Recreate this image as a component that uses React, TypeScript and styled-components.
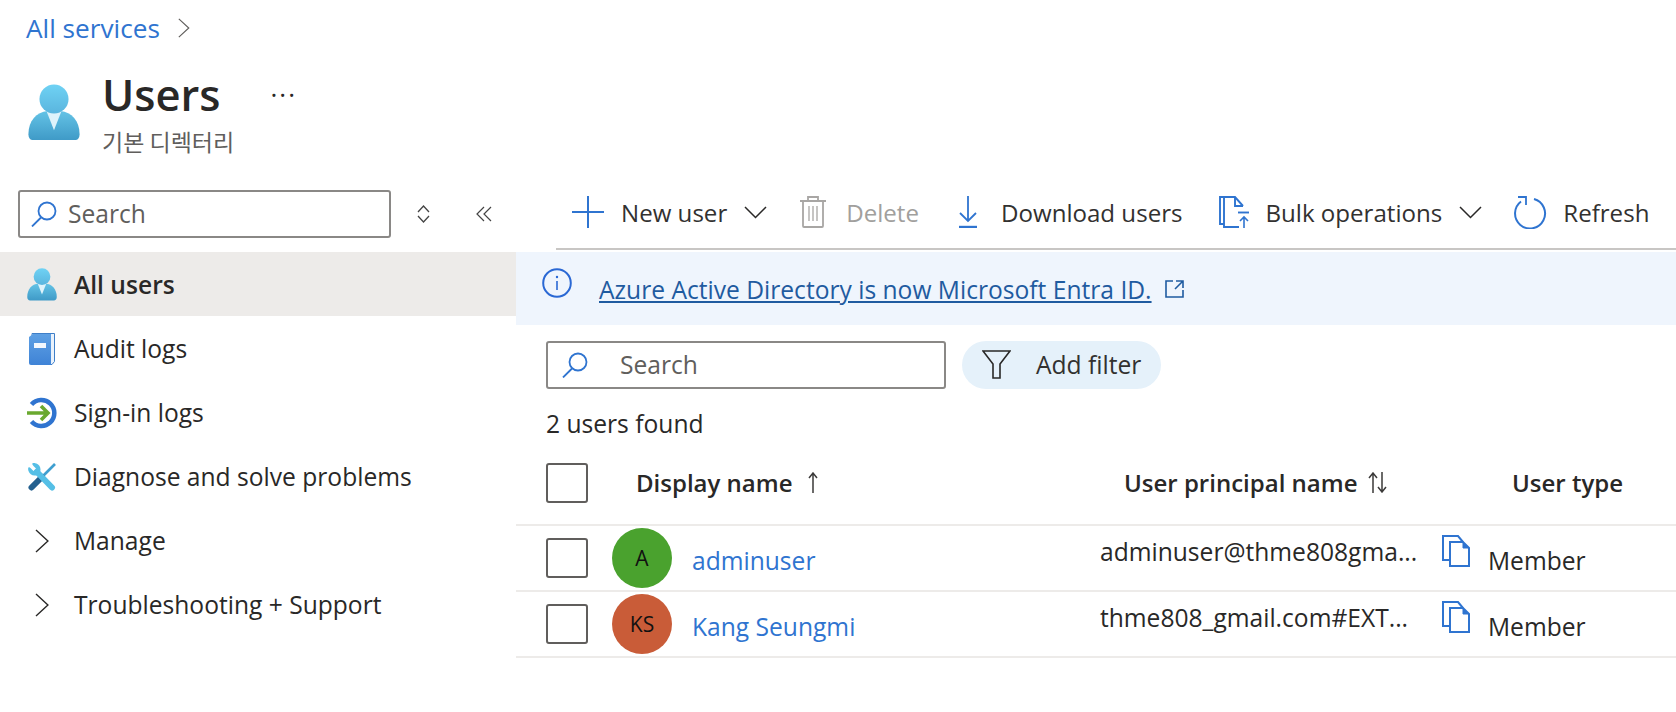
import React, { useId } from "react";
import styled, { createGlobalStyle } from "styled-components";

const blue = "#2f74d0";

const GlobalStyle = createGlobalStyle`
  html, body {
    margin: 0;
    padding: 0;
    background: #fff;
  }
  body {
    font-family: "Open Sans", "Noto Sans", "Noto Sans CJK KR", sans-serif;
    color: #292827;
    overflow: hidden;
  }
`;

type IconProps = { size?: number };

const PersonIcon: React.FC<IconProps> = ({ size = 32 }) => {
  const id = useId();
  return (
    <svg width={size} height={size * 1.08} viewBox="0 0 51 56">
      <defs>
        <linearGradient id={`${id}h`} x1="0" y1="0" x2="0" y2="1">
          <stop offset="0" stopColor="#6fd2f4" />
          <stop offset="1" stopColor="#5ab5de" />
        </linearGradient>
        <linearGradient id={`${id}b`} x1="0" y1="0" x2="0" y2="1">
          <stop offset="0" stopColor="#64c3e6" />
          <stop offset="1" stopColor="#3f9ac7" />
        </linearGradient>
      </defs>
      <path d="M0 50C0 37 8 28 19 27h13c11 1 19 10 19 23 0 4-2 6-5 6H5c-3 0-5-2-5-6z" fill={`url(#${id}b)`} />
      <path d="M18 27h15l-7.500 19z" fill="#dff3fb" />
      <circle cx="25.500" cy="15" r="14.500" fill={`url(#${id}h)`} />
    </svg>
  );
};

const BookIcon = () => {
  const id = useId();
  return (
    <svg width="26" height="32" viewBox="0 0 26 32">
      <defs>
        <linearGradient id={id} x1="0" y1="0" x2="0" y2="1">
          <stop offset="0" stopColor="#5ea0e4" />
          <stop offset="1" stopColor="#3f83d6" />
        </linearGradient>
      </defs>
      <path d="M3 .5h22.500v28L23 31.500H3z" fill="#eaf2fb" stroke="#3f7fc8" />
      <path d="M2 2.500 4 1h18v31H2a2 2 0 0 1-2-2V4z" fill={`url(#${id})`} />
      <rect x="5" y="10" width="12" height="5" fill="#f2f7fd" />
    </svg>
  );
};

const SignInIcon = () => (
  <svg width="30" height="32" viewBox="0 0 30 32" fill="none">
    <path d="M4.500 7.500A13 13 0 1 1 4.500 24.500" stroke={blue} strokeWidth="4.500" />
    <path d="M0 16h21M14 9l7 7-7 7" stroke="#6aa92f" strokeWidth="3.600" />
  </svg>
);

const WrenchIcon = () => (
  <svg width="28" height="28" viewBox="0 0 28 28" fill="none">
    <path d="M27 1 15 13" stroke="#3f9fd0" strokeWidth="2.600" />
    <path d="M3.500 24.500 14 14" stroke="#24608f" strokeWidth="6" strokeLinecap="round" />
    <path d="M9 9 24 24.500" stroke="#55bfe6" strokeWidth="6" strokeLinecap="round" />
    <path d="M8 .5C4.500-.5 3 .5 5.500 3L8 5.500 5.500 8 3 5.500C.5 3-.5 5 .5 8c1 3.500 5 5.500 8.500 4l3-3c1.500-3.500-.5-7.500-3.500-8.500z" fill="#55bfe6" />
  </svg>
);

const ChevronRight: React.FC<{ color?: string; size?: number }> = ({ color = "#292827", size = 24 }) => (
  <svg width={size * 0.58} height={size} viewBox="0 0 14 24" fill="none">
    <path d="M1 1l12 11L1 23" stroke={color} strokeWidth="1.400" />
  </svg>
);

const ChevronDown = () => (
  <svg width="23" height="13" viewBox="0 0 23 13" fill="none">
    <path d="M1 1l10.500 10.500L22 1" stroke="#292827" strokeWidth="1.500" />
  </svg>
);

const SearchIcon = () => (
  <svg width="26" height="26" viewBox="0 0 26 26" fill="none">
    <circle cx="16" cy="10" r="8.500" stroke={blue} strokeWidth="1.800" />
    <path d="M10 16.500 1 25.500" stroke={blue} strokeWidth="1.800" />
  </svg>
);

const UpDownIcon = () => (
  <svg width="13" height="18" viewBox="0 0 13 18" fill="none">
    <path d="M1 7l5.500-6L12 7M1 11l5.500 6L12 11" stroke="#444" strokeWidth="1.300" />
  </svg>
);

const CollapseIcon = () => (
  <svg width="16" height="16" viewBox="0 0 16 16" fill="none">
    <path d="M8 1 1 8l7 7M15 1 8 8l7 7" stroke="#444" strokeWidth="1.200" />
  </svg>
);

const PlusIcon = () => (
  <svg width="32" height="32" viewBox="0 0 32 32" fill="none">
    <path d="M0 16h32M16 0v32" stroke={blue} strokeWidth="2" />
  </svg>
);

const TrashIcon = () => (
  <svg width="26" height="32" viewBox="0 0 26 32" fill="none" stroke="#a8a6a4" strokeWidth="1.800">
    <path d="M0 5h26M8 5V1h10v4M3 5v25a1 1 0 0 0 1 1h18a1 1 0 0 0 1-1V5" />
    <path d="M9 10v15M13 10v15M17 10v15" strokeWidth="1.300" />
  </svg>
);

const DownloadIcon = () => (
  <svg width="18" height="32" viewBox="0 0 18 32" fill="none" stroke={blue} strokeWidth="1.800">
    <path d="M9 0v25M1 17l8 8 8-8" />
    <path d="M0 31h18" strokeWidth="2.400" />
  </svg>
);

const BulkIcon = () => (
  <svg width="30" height="32" viewBox="0 0 30 32" fill="none" stroke={blue} strokeWidth="1.900">
    <path d="M5 28H1V1h15" />
    <path d="M24 10 16 1H5v30h15" />
    <path d="M16 1v9h8" />
    <path d="M19 16.500h11" />
    <path d="M25 32V21M21 25l4-4 4 4" strokeWidth="1.600" />
  </svg>
);

const RefreshIcon = () => (
  <svg width="33" height="33" viewBox="0 0 33 33" fill="none" stroke={blue} strokeWidth="2">
    <path d="M20 3a15 15 0 1 1-13 2.500" />
    <path d="M4 1h8v8" strokeWidth="1.800" />
  </svg>
);

const InfoIcon = () => (
  <svg width="30" height="30" viewBox="0 0 30 30" fill="none">
    <circle cx="15" cy="15" r="13.800" stroke="#2a68d4" strokeWidth="2" />
    <path d="M15 13v9" stroke="#2a68d4" strokeWidth="1.600" />
    <circle cx="15" cy="9" r="1.200" fill="#2a68d4" />
  </svg>
);

const ExternalIcon = () => (
  <svg width="19" height="18" viewBox="0 0 19 18" fill="none" stroke="#1f5ba0" strokeWidth="1.600">
    <path d="M8 1H1v16h17v-7M10 9l8-8M11 1h7v7" />
  </svg>
);

const FilterIcon = () => (
  <svg width="29" height="29" viewBox="0 0 29 29" fill="none" stroke="#292827" strokeWidth="1.600">
    <path d="M1 1h27L18 14v14h-7V14z" />
  </svg>
);

const CopyIcon = () => (
  <svg width="28" height="32" viewBox="0 0 28 32" fill="none" stroke={blue} strokeWidth="2">
    <path d="M8 25H1V1h15l5 6" />
    <path d="M8 7h13l6 6v18H8z" />
    <path d="M21 7l6 6h-6z" fill={blue} strokeWidth="1" />
  </svg>
);

const SortUpIcon = () => (
  <svg width="10" height="21" viewBox="0 0 10 21" fill="none" stroke="#3b3a39" strokeWidth="1.500">
    <path d="M5 21V1M1 6l4-5 4 5" />
  </svg>
);

const SortBothIcon = () => (
  <svg width="19" height="21" viewBox="0 0 19 21" fill="none" stroke="#3b3a39" strokeWidth="1.500">
    <path d="M5 21V1M1 6l4-5 4 5M14 0v20M10 15l4 5 4-5" />
  </svg>
);

const navItems = [
  { label: "All users", icon: <PersonIcon size={30} />, active: true },
  { label: "Audit logs", icon: <BookIcon /> },
  { label: "Sign-in logs", icon: <SignInIcon /> },
  { label: "Diagnose and solve problems", icon: <WrenchIcon /> },
  { label: "Manage", icon: <ChevronRight /> },
  { label: "Troubleshooting + Support", icon: <ChevronRight /> },
];

const users = [
  { initials: "A", color: "#4aa22e", name: "adminuser", upn: "adminuser@thme808gma..." },
  { initials: "KS", color: "#c95c38", name: "Kang Seungmi", upn: "thme808_gmail.com#EXT..." },
];

const App: React.FC = () => (
  <Page>
    <GlobalStyle />
    <Breadcrumb>
      <BreadcrumbLink>All services</BreadcrumbLink>
      <ChevronRight color="#605e5c" size={20} />
    </Breadcrumb>
    <Header>
      <PersonIcon size={52} />
      <TitleBlock>
        <TitleRow>
          <Title>Users</Title>
          <Dots>···</Dots>
        </TitleRow>
        <Subtitle>기본 디렉터리</Subtitle>
      </TitleBlock>
    </Header>
    <Body>
      <Sidebar>
        <SidebarTools>
          <NavSearch>
            <SearchIcon />
            <SearchInput placeholder="Search" />
          </NavSearch>
          <SideTool><UpDownIcon /></SideTool>
          <SideTool><CollapseIcon /></SideTool>
        </SidebarTools>
        <Nav>
          {navItems.map((item) => (
            <NavRow key={item.label} $active={item.active}>
              <NavIcon>{item.icon}</NavIcon>
              {item.label}
            </NavRow>
          ))}
        </Nav>
      </Sidebar>
      <Main>
        <Toolbar>
          <ToolButton $after={33}><PlusIcon />New user<ChevronDown /></ToolButton>
          <ToolButton $disabled $gap={20} $after={40}><TrashIcon />Delete</ToolButton>
          <ToolButton $gap={24} $after={36}><DownloadIcon />Download users</ToolButton>
          <ToolButton $after={32}><BulkIcon />Bulk operations<ChevronDown /></ToolButton>
          <ToolButton $gap={16}><RefreshIcon />Refresh</ToolButton>
        </Toolbar>
        <Banner>
          <InfoIcon />
          <BannerLink>Azure Active Directory is now Microsoft Entra ID.</BannerLink>
          <ExternalIcon />
        </Banner>
        <FilterRow>
          <TableSearch>
            <SearchIcon />
            <SearchInput placeholder="Search" />
          </TableSearch>
          <FilterPill><FilterIcon />Add filter</FilterPill>
        </FilterRow>
        <Count>2 users found</Count>
        <HeadRow>
          <Checkbox />
          <HeadCell $gap={15}>Display name<SortUpIcon /></HeadCell>
          <HeadCell $gap={11}>User principal name<SortBothIcon /></HeadCell>
          <HeadCell $type>User type</HeadCell>
        </HeadRow>
        {users.map((user) => (
          <UserRow key={user.name}>
            <Checkbox />
            <NameCell>
              <Avatar $color={user.color}>{user.initials}</Avatar>
              <UserLink>{user.name}</UserLink>
            </NameCell>
            <UpnCell>{user.upn}</UpnCell>
            <TypeCell><CopyIcon /><MemberText>Member</MemberText></TypeCell>
          </UserRow>
        ))}
      </Main>
    </Body>
  </Page>
);

export default App;

const Page = styled.div`
  width: 1676px;
  height: 712px;
  overflow: hidden;
  font-size: 24.6px;
`;

const Breadcrumb = styled.div`
  display: flex;
  align-items: center;
  gap: 18px;
  height: 56px;
  padding-left: 26px;
`;

const BreadcrumbLink = styled.a`
  color: ${blue};
  font-size: 26.2px;
`;

const Header = styled.div`
  display: flex;
  align-items: flex-start;
  height: 134px;
  padding: 28px 0 0 28px;
  box-sizing: border-box;
`;

const TitleBlock = styled.div`
  display: flex;
  flex-direction: column;
  margin-left: 22px;
  margin-top: -22px;
`;

const TitleRow = styled.div`
  display: flex;
  align-items: center;
  gap: 50px;
  height: 64px;
`;

const Title = styled.h1`
  margin: 0;
  font-size: 43.5px;
  font-weight: 600;
  color: #292827;
`;

const Dots = styled.span`
  font-size: 26px;
  letter-spacing: 2px;
  color: #292827;
  line-height: 1;
`;

const Subtitle = styled.div`
  margin-top: -2px;
  font-family: "Noto Sans CJK KR", sans-serif;
  font-size: 23px;
  color: #605e5c;
`;

const Body = styled.div`
  display: flex;
`;

const Sidebar = styled.aside`
  width: 516px;
  flex: none;
`;

const SidebarTools = styled.div`
  display: flex;
  align-items: center;
  height: 48px;
  padding-left: 18px;
  margin-bottom: 14px;
`;

const NavSearch = styled.div`
  display: flex;
  align-items: center;
  gap: 11px;
  width: 373px;
  height: 48px;
  padding-left: 11px;
  box-sizing: border-box;
  border: 2px solid #8a8886;
  border-radius: 3px;
`;

const TableSearch = styled(NavSearch)`
  width: 400px;
  gap: 32px;
  padding-left: 14px;
`;

const SearchInput = styled.input`
  flex: 1;
  min-width: 0;
  border: none;
  outline: none;
  background: none;
  padding: 0 0 2px;
  font: inherit;
  font-size: 24.6px;
  &::placeholder {
    color: #605e5c;
    opacity: 1;
  }
`;

const SideTool = styled.span`
  display: flex;
  justify-content: center;
  width: 58px;
  margin-left: 3px;
`;

const Nav = styled.nav`
  display: flex;
  flex-direction: column;
`;

const NavRow = styled.div<{ $active?: boolean }>`
  display: flex;
  align-items: center;
  height: 64px;
  box-sizing: border-box;
  padding: 1px 0 0 26px;
  background: ${(p) => (p.$active ? "#edebe9" : "transparent")};
  font-weight: ${(p) => (p.$active ? 600 : 400)};
`;

const NavIcon = styled.span`
  display: flex;
  align-items: center;
  justify-content: center;
  width: 32px;
  margin-right: 16px;
`;

const Main = styled.main`
  flex: 1;
  min-width: 0;
`;

const Toolbar = styled.div`
  display: flex;
  align-items: center;
  height: 60px;
  margin-left: 40px;
  padding: 0 0 14px 16px;
  border-bottom: 2px solid #c8c6c4;
  box-sizing: border-box;
  font-size: 24.1px;
`;

const ToolButton = styled.div<{ $disabled?: boolean; $gap?: number; $after?: number }>`
  display: flex;
  align-items: center;
  gap: ${(p) => p.$gap ?? 17}px;
  margin-right: ${(p) => p.$after ?? 34}px;
  color: ${(p) => (p.$disabled ? "#a19f9d" : "#323130")};
  white-space: nowrap;
`;

const Banner = styled.div`
  display: flex;
  align-items: center;
  height: 73px;
  margin-top: 2px;
  padding-left: 26px;
  background: #eff5fd;
  svg:first-child {
    margin-right: 27px;
    margin-top: -12px;
  }
  svg:last-child {
    margin-left: 13px;
  }
`;

const BannerLink = styled.a`
  color: #1f5ba0;
  text-decoration: underline;
  margin-top: 2px;
`;

const FilterRow = styled.div`
  display: flex;
  gap: 16px;
  padding: 16px 0 0 30px;
`;

const FilterPill = styled.div`
  display: flex;
  align-items: center;
  gap: 25px;
  width: 199px;
  height: 48px;
  box-sizing: border-box;
  padding: 0 0 2px 20px;
  border-radius: 24px;
  background: #e5f1fa;
  color: #323130;
`;

const Count = styled.div`
  height: 34px;
  margin-top: 18px;
  padding-left: 30px;
  line-height: 34px;
`;

const rowColumns = "66px 488px 342px 1fr";

const HeadRow = styled.div`
  display: grid;
  grid-template-columns: ${rowColumns};
  align-items: center;
  height: 85px;
  padding-left: 30px;
  border-bottom: 2px solid #edebe9;
  box-sizing: border-box;
`;

const HeadCell = styled.div<{ $type?: boolean; $gap?: number }>`
  display: flex;
  align-items: center;
  gap: ${(p) => p.$gap ?? 0}px;
  font-size: 24px;
  font-weight: 600;
  padding-left: ${(p) => (p.$type ? 70 : 24)}px;
  white-space: nowrap;
`;

const UserRow = styled.div`
  display: grid;
  grid-template-columns: ${rowColumns};
  align-items: center;
  height: 66px;
  padding-left: 30px;
  border-bottom: 2px solid #edebe9;
  box-sizing: border-box;
`;

const Checkbox = styled.span`
  display: block;
  width: 42px;
  height: 40px;
  box-sizing: border-box;
  border: 2px solid #605e5c;
  border-radius: 3px;
`;

const NameCell = styled.div`
  display: flex;
  align-items: center;
  gap: 20px;
`;

const Avatar = styled.span<{ $color: string }>`
  display: flex;
  align-items: center;
  justify-content: center;
  width: 60px;
  height: 60px;
  border-radius: 50%;
  background: ${(p) => p.$color};
  color: #111;
  font-size: 21px;
`;

const UserLink = styled.a`
  color: ${blue};
  margin-top: 4px;
`;

const UpnCell = styled.div`
  margin-bottom: 14px;
  white-space: nowrap;
`;

const TypeCell = styled.div`
  display: flex;
  align-items: center;
  gap: 18px;
  svg {
    margin-bottom: 14px;
  }
`;

const MemberText = styled.span`
  margin-top: 5px;
`;
